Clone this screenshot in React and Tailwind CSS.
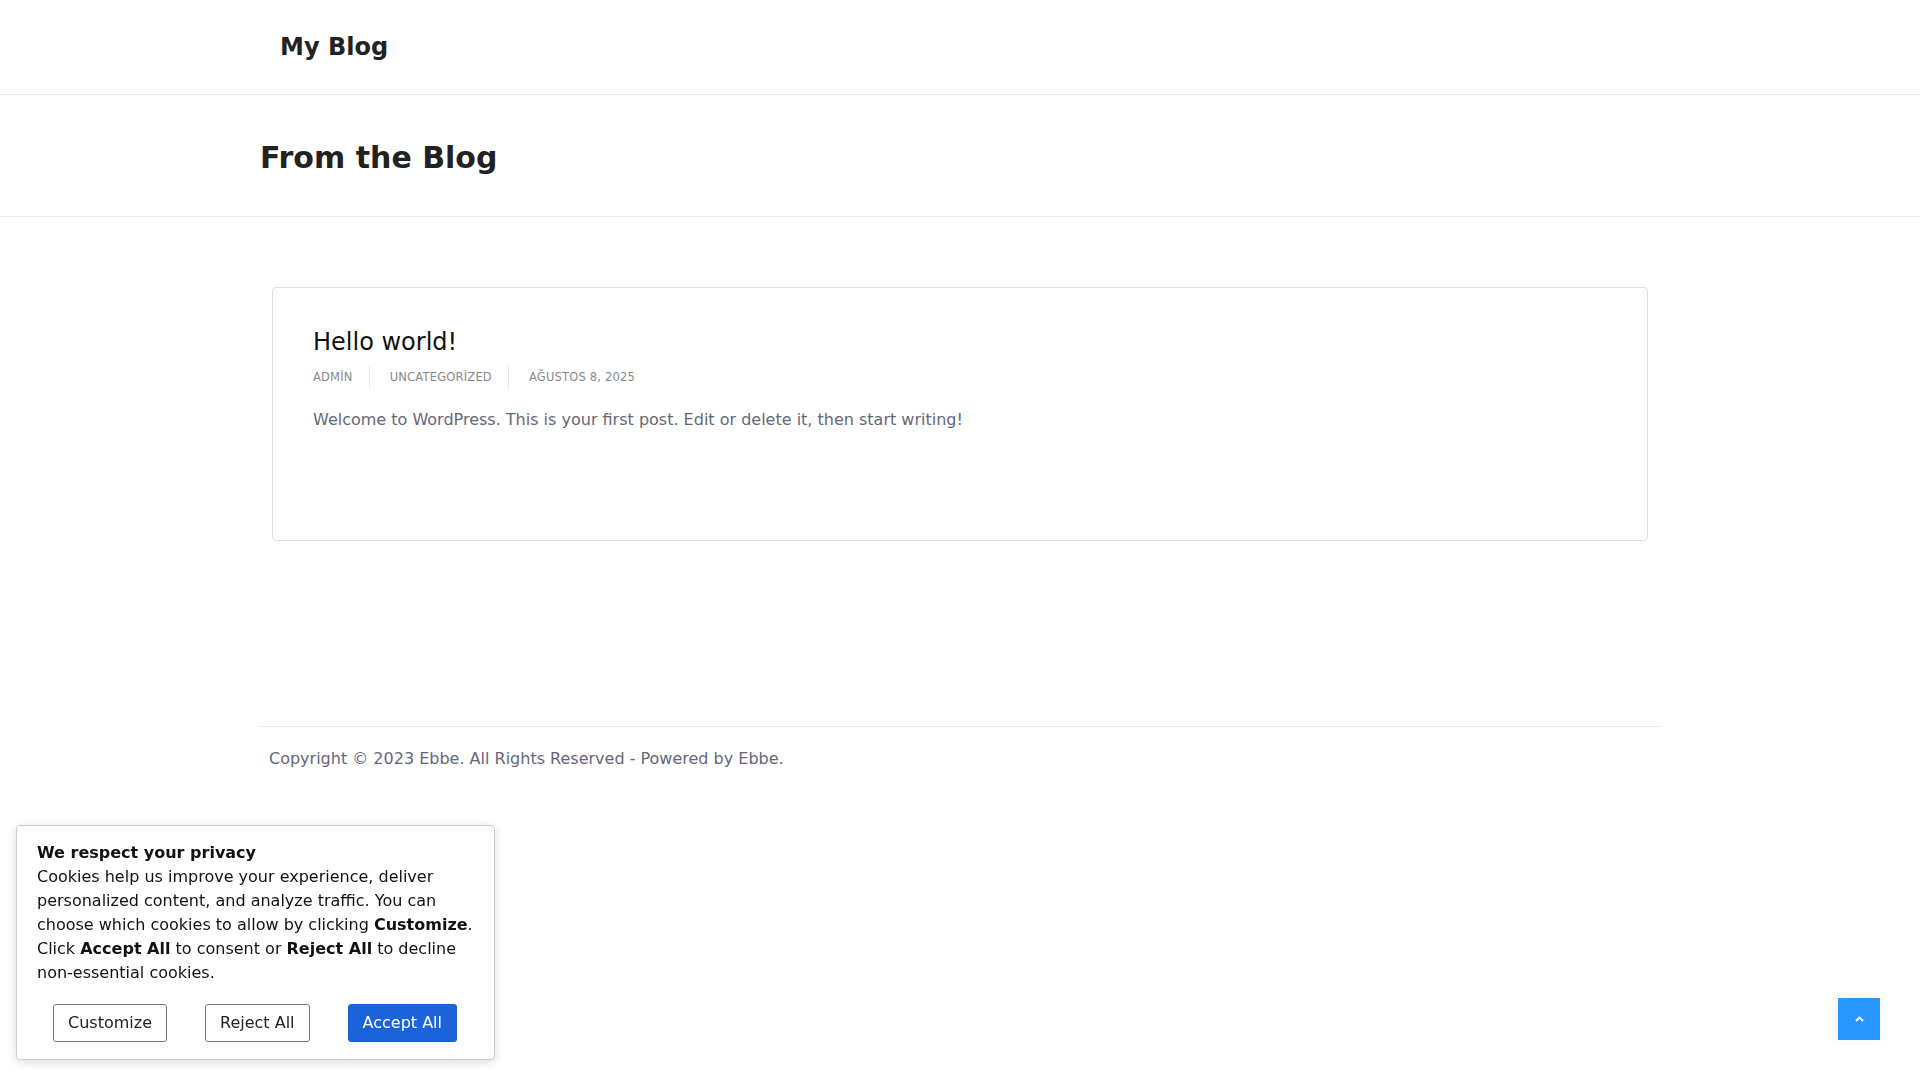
import { useState } from "react";

const META = ["ADMİN", "UNCATEGORİZED", "AĞUSTOS 8, 2025"];

function ScrollTop() {
  return (
    <button
      type="button"
      aria-label="Scroll to top"
      className="fixed right-10 bottom-10 h-[42px] w-[42px] bg-[#2996ff] flex items-center justify-center shadow-[0_0_10px_rgba(0,0,0,0.06)]"
    >
      <svg width="9" height="6" viewBox="0 0 9 6" fill="none">
        <path d="M1 5 L4.5 1.6 L8 5" stroke="#fff" strokeWidth="2" />
      </svg>
    </button>
  );
}

function CookieBanner({ onClose }) {
  return (
    <div className="fixed left-[16px] bottom-[20px] w-[479px] bg-white border border-[#c9ccd1] rounded-[4px] shadow-[0_2px_10px_rgba(0,0,0,0.15)] px-5 pt-[15px] pb-[17px] text-[16px] leading-6 text-[#111]">
      <p className="font-bold">We respect your privacy</p>
      <p>
        Cookies help us improve your experience, deliver personalized content,
        and analyze traffic. You can choose which cookies to allow by clicking{" "}
        <b>Customize</b>. Click <b>Accept All</b> to consent or <b>Reject All</b>{" "}
        to decline non-essential cookies.
      </p>
      <div className="flex justify-between pl-[16px] pr-[17px] mt-[19px]">
        <button
          type="button"
          className="border border-[#7a7a7a] rounded-[3px] px-[14px] py-[6px] text-[#222] bg-white"
        >
          Customize
        </button>
        <button
          type="button"
          onClick={onClose}
          className="border border-[#7a7a7a] rounded-[3px] px-[14px] py-[6px] text-[#222] bg-white"
        >
          Reject All
        </button>
        <button
          type="button"
          onClick={onClose}
          className="border border-[#1a5fcf] rounded-[3px] px-[14px] py-[6px] text-white bg-[#1b63da]"
        >
          Accept All
        </button>
      </div>
    </div>
  );
}

export default function App() {
  const [showCookies, setShowCookies] = useState(true);

  return (
    <div className="min-h-screen bg-white font-['DejaVu_Sans',sans-serif] text-[#222]">
      <header className="h-[95px] border-b border-[#ececec]">
        <div className="w-[1400px] mx-auto h-full flex items-center pl-5">
          <a href="#" className="text-[24px] font-bold leading-none text-[#222] pb-[1px]">
            My Blog
          </a>
        </div>
      </header>

      <section className="h-[122px] border-b border-[#ececec]">
        <div className="w-[1400px] mx-auto h-full flex items-center">
          <h1 className="text-[30px] font-bold leading-none text-[#222] pt-[4px]">
            From the Blog
          </h1>
        </div>
      </section>

      <main className="w-[1400px] mx-auto px-3 pt-[70px]">
        <article className="border border-[#dedede] rounded-[4px] px-10 pt-[40px] pb-[108px]">
          <h2 className="text-[24px] leading-[29px] text-[#111]">Hello world!</h2>
          <div className="flex items-center mt-[9px] text-[11.5px] tracking-[0.2px] leading-[22px] text-[#888]">
            {META.map((m, i) => (
              <span
                key={m}
                className={
                  i < META.length - 1
                    ? "pr-4 border-r border-[#e8e8e8] " + (i > 0 ? "pl-5" : "")
                    : "pl-5"
                }
              >
                {m}
              </span>
            ))}
          </div>
          <p className="mt-5 text-[16px] leading-6 text-[#66667a]">
            Welcome to WordPress. This is your first post. Edit or delete it, then
            start writing!
          </p>
        </article>
      </main>

      <footer className="w-[1400px] mx-auto mt-[185px] border-t border-[#ececec] pt-[20px] pb-10">
        <p className="pl-[9px] text-[16px] leading-6 text-[#66667a]">
          Copyright © 2023 Ebbe. All Rights Reserved - Powered by Ebbe.
        </p>
      </footer>

      <ScrollTop />
      {showCookies && <CookieBanner onClose={() => setShowCookies(false)} />}
    </div>
  );
}
